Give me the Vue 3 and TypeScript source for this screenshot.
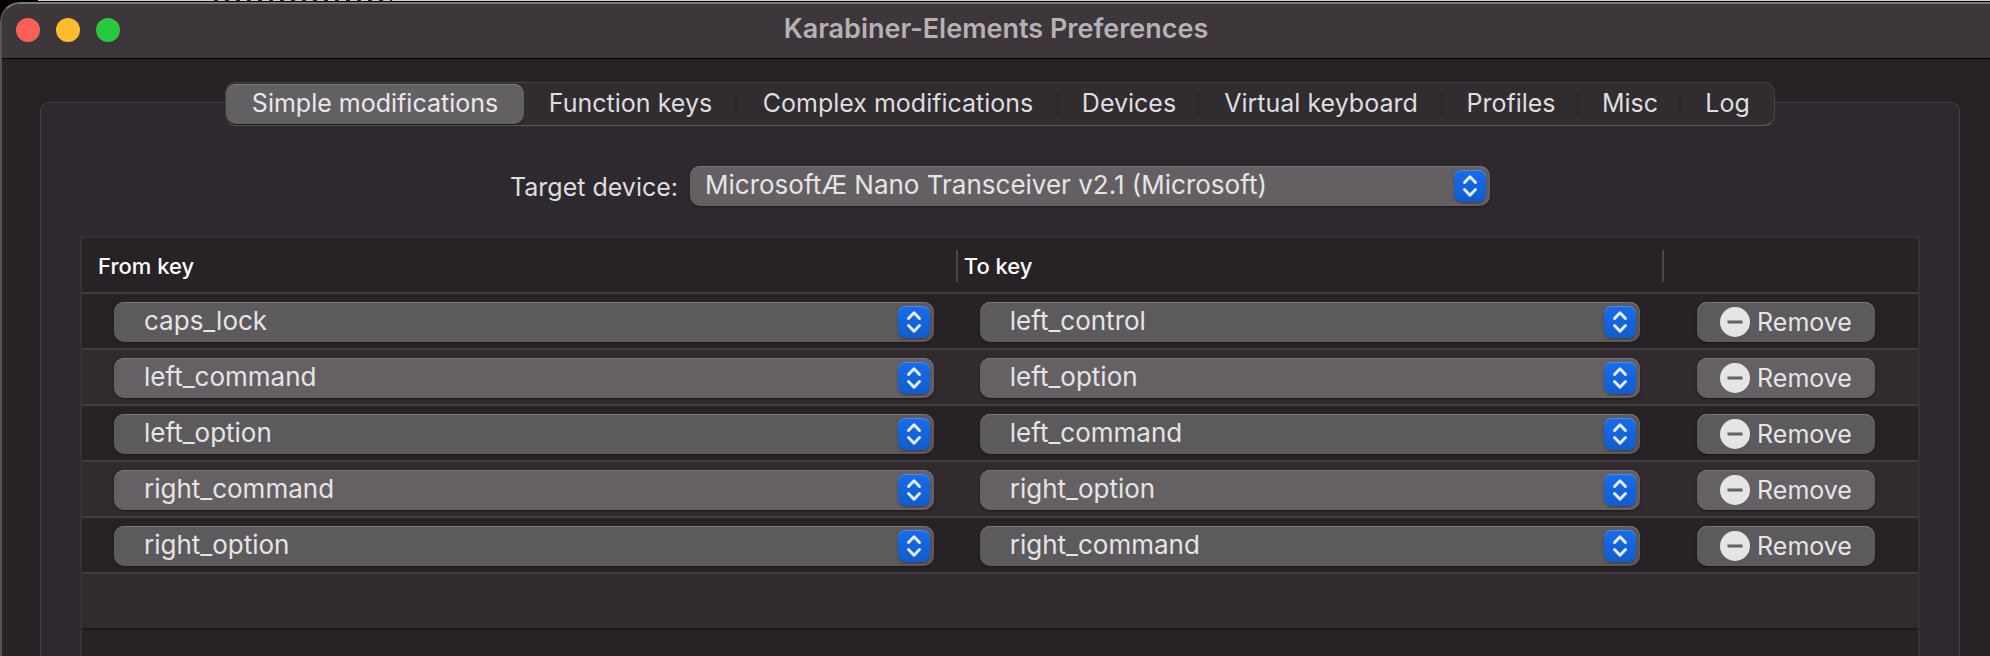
<script setup lang="ts">
import { ref } from 'vue'

interface Modification {
  id: number
  from: string
  to: string
}

const tabs = [
  'Simple modifications',
  'Function keys',
  'Complex modifications',
  'Devices',
  'Virtual keyboard',
  'Profiles',
  'Misc',
  'Log',
]
const activeTab = ref(tabs[0])

const keys = [
  'caps_lock',
  'left_control',
  'left_command',
  'left_option',
  'right_command',
  'right_option',
]

const devices = ['MicrosoftÆ Nano Transceiver v2.1 (Microsoft)']
const device = ref(devices[0])

const rows = ref<Modification[]>([
  { id: 1, from: 'caps_lock', to: 'left_control' },
  { id: 2, from: 'left_command', to: 'left_option' },
  { id: 3, from: 'left_option', to: 'left_command' },
  { id: 4, from: 'right_command', to: 'right_option' },
  { id: 5, from: 'right_option', to: 'right_command' },
])

function removeRow(id: number) {
  rows.value = rows.value.filter((row) => row.id !== id)
}
</script>

<template>
  <div class="desktop">
    <div class="window">
      <header class="titlebar">
        <div class="lights">
          <button class="light close" type="button" aria-label="Close"></button>
          <button class="light minimize" type="button" aria-label="Minimize"></button>
          <button class="light zoom" type="button" aria-label="Zoom"></button>
        </div>
        <h1 class="title">Karabiner-Elements Preferences</h1>
      </header>

      <main class="content">
        <div class="tabs" role="tablist">
          <button
            v-for="tab in tabs"
            :key="tab"
            class="tab"
            :class="{ active: tab === activeTab }"
            type="button"
            role="tab"
            :aria-selected="tab === activeTab"
            @click="activeTab = tab"
          >
            {{ tab }}
          </button>
        </div>

        <section class="panel">
          <div class="target">
            <label for="device">Target device:</label>
            <div class="popup device">
              <select id="device" v-model="device">
                <option v-for="d in devices" :key="d">{{ d }}</option>
              </select>
              <span class="stepper">
                <svg viewBox="0 0 32 32" aria-hidden="true">
                  <path d="M10.500 12.500 16 6.800 21.500 12.500M10.500 19.500 16 25.200 21.500 19.500" />
                </svg>
              </span>
            </div>
          </div>

          <div class="list">
            <table>
              <colgroup>
                <col class="col-from" />
                <col />
                <col class="col-action" />
              </colgroup>
              <thead>
                <tr>
                  <th scope="col"><span>From key</span></th>
                  <th scope="col"><span>To key</span></th>
                  <td><span></span></td>
                </tr>
              </thead>
              <tbody>
                <tr v-for="row in rows" :key="row.id">
                  <td class="from">
                    <div class="popup">
                      <select v-model="row.from" aria-label="From key">
                        <option v-for="k in keys" :key="k">{{ k }}</option>
                      </select>
                      <span class="stepper">
                        <svg viewBox="0 0 32 32" aria-hidden="true">
                          <path d="M10.500 12.500 16 6.800 21.500 12.500M10.500 19.500 16 25.200 21.500 19.500" />
                        </svg>
                      </span>
                    </div>
                  </td>
                  <td class="to">
                    <div class="popup">
                      <select v-model="row.to" aria-label="To key">
                        <option v-for="k in keys" :key="k">{{ k }}</option>
                      </select>
                      <span class="stepper">
                        <svg viewBox="0 0 32 32" aria-hidden="true">
                          <path d="M10.500 12.500 16 6.800 21.500 12.500M10.500 19.500 16 25.200 21.500 19.500" />
                        </svg>
                      </span>
                    </div>
                  </td>
                  <td class="action">
                    <button class="remove" type="button" @click="removeRow(row.id)">
                      <svg viewBox="0 0 30 30" aria-hidden="true">
                        <circle cx="15" cy="15" r="15" />
                        <path d="M7.500 15H22.500" />
                      </svg>
                      Remove
                    </button>
                  </td>
                </tr>
              </tbody>
            </table>
            <div class="empty-row"></div>
          </div>
        </section>
      </main>
    </div>
  </div>
</template>

<style>
body {
  background: #000;
}
</style>

<style scoped>
* {
  box-sizing: border-box;
}

.desktop {
  display: flex;
  height: 100vh;
  padding-top: 2px;
  overflow: hidden;
  background:
    repeating-linear-gradient(90deg, #26292a 0 4px, #cfd6d0 4px 11px) 214px 0 / 178px 1px no-repeat,
    linear-gradient(90deg, #000 38px, #cfd6d0 38px) top / 100% 1px no-repeat,
    #000;
  font-family: Inter, 'Liberation Sans', sans-serif;
  font-size: 25px;
  line-height: 30px;
  color: #dfdddf;
}

.window {
  display: flex;
  flex: 1;
  flex-direction: column;
  min-width: 0;
  border-left: 2px solid #575356;
  border-top: 2px solid #7b787a;
  border-top-left-radius: 20px;
  background: #272226;
  overflow: hidden;
}

button,
select {
  margin: 0;
  border: 0;
  font: inherit;
  color: inherit;
}

.titlebar {
  display: grid;
  grid-template-columns: 1fr auto 1fr;
  align-items: center;
  height: 55px;
  flex: none;
  padding: 0 14px 2px;
  border-bottom: 1px solid #000;
  background: #3d373b;
}

.lights {
  display: flex;
  gap: 16px;
}

.light {
  width: 24px;
  height: 24px;
  padding: 0;
  border-radius: 50%;
}

.close {
  background: #ff5f57;
}

.minimize {
  background: #febc2e;
}

.zoom {
  background: #28c840;
}

.title {
  margin: 0;
  padding-bottom: 2px;
  font-size: 27px;
  font-weight: 600;
  line-height: 30px;
  color: #b7b1b5;
}

.content {
  display: flex;
  flex: 1;
  flex-direction: column;
  min-height: 0;
  padding: 23px 30px 0 38px;
}

.tabs {
  z-index: 1;
  display: grid;
  grid-template-columns: 298fr 213fr 322fr 140fr 244fr 136fr 102fr 93fr;
  align-self: center;
  width: 100%;
  max-width: 1550px;
  height: 44px;
  margin-bottom: -24px;
  padding: 1px 0;
  border: 1px solid #454144;
  border-bottom-color: #5b585a;
  border-radius: 11px;
  background: #312c30;
}

.tab {
  display: flex;
  align-items: center;
  justify-content: center;
  min-width: 0;
  padding: 0 0 2px;
  background: linear-gradient(#29252a, #29252a) right / 2px 24px no-repeat;
  white-space: nowrap;
}

.tab:last-child {
  background: none;
}

.tab.active {
  border-radius: 10px;
  background: #636063;
  box-shadow: inset 0 1px #7d7a7d, 0 1px 1px #1d191c;
  color: #eae8ea;
}

.panel {
  display: flex;
  flex: 1;
  flex-direction: column;
  min-height: 0;
  padding: 63px 39px 0;
  border: 1px solid #454144;
  border-bottom: 0;
  border-radius: 9px 9px 0 0;
  background: #2e292e;
}

.target {
  display: flex;
  align-items: center;
  justify-content: center;
  gap: 12px;
  margin-bottom: 30px;
}

.target label {
  padding-top: 2px;
}

.popup {
  display: grid;
  grid-template-columns: 1fr 36px;
  align-items: center;
  height: 40px;
  font-size: 26px;
}

.popup select {
  grid-area: 1 / 1 / 2 / 3;
  width: 100%;
  height: 40px;
  padding: 0 40px 2px 30px;
  border-radius: 10px;
  appearance: none;
  background: #5c5a5c;
  box-shadow: inset 0 1px #7a787a, 0 1px 2px #19161a;
  color: #e6e4e6;
}

.device {
  width: 800px;
}

.device select {
  padding-left: 15px;
  background: #645f63;
}

.stepper {
  z-index: 1;
  grid-area: 1 / 2;
  width: 32px;
  height: 32px;
  border-radius: 8px;
  background: linear-gradient(#176bea, #125dcd);
  box-shadow: inset 0 1px #4a8bee, 0 1px 2px #3c3a3d;
  pointer-events: none;
}

.stepper svg {
  display: block;
}

.stepper path {
  fill: none;
  stroke: #e3ebfa;
  stroke-width: 3;
  stroke-linecap: round;
  stroke-linejoin: round;
}

.list {
  flex: 1;
  min-height: 0;
  border: 2px solid #343334;
  border-bottom: 0;
  background: #272226;
}

table {
  width: 100%;
  table-layout: fixed;
  border-collapse: separate;
  border-spacing: 0;
}

.col-from {
  width: 47.7%;
}

.col-action {
  width: 254px;
}

thead th,
thead td {
  height: 56px;
  padding: 2px 0 0;
  border-bottom: 2px solid #413c40;
  font-size: 22px;
  font-weight: 500;
  line-height: 32px;
  text-align: left;
  color: #fff;
}

thead span {
  display: block;
  height: 32px;
  padding-left: 6px;
}

th:first-child span {
  padding-left: 16px;
}

th span {
  border-right: 2px solid #4a464a;
}

tbody td {
  height: 56px;
  padding: 8px 24px 6px 22px;
  border-bottom: 2px solid #413c40;
}

tbody td.from {
  padding-left: 32px;
}

tbody td.action {
  padding-left: 33px;
}

tbody tr:nth-child(even) {
  background: #312b30;
}

tbody tr:nth-child(even) select,
tbody tr:nth-child(even) .remove {
  background: #656064;
}

.remove {
  display: flex;
  align-items: center;
  justify-content: center;
  gap: 7px;
  width: 178px;
  height: 40px;
  padding: 0;
  border-radius: 10px;
  background: #5c5a5c;
  box-shadow: inset 0 1px #7a787a, 0 1px 2px #19161a;
  color: #e6e4e6;
}

.remove svg {
  width: 30px;
  height: 30px;
}

.remove circle {
  fill: #e6e5e6;
}

.remove path {
  stroke: #656165;
  stroke-width: 3;
}

.empty-row {
  height: 56px;
  border-bottom: 2px solid #1d1a1d;
  background: #312b30;
}
</style>
